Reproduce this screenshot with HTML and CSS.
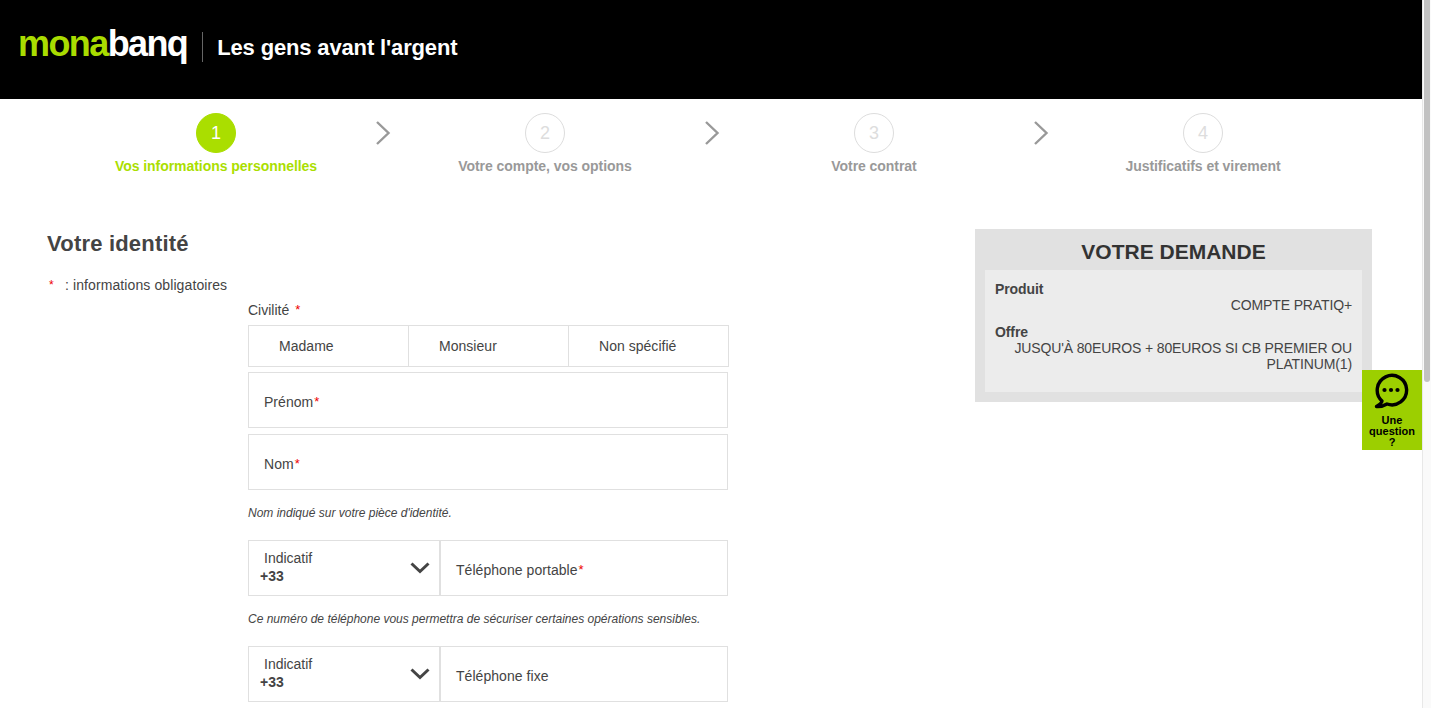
FILE: index.html
```
<!DOCTYPE html>
<html lang="fr">
<head>
<meta charset="utf-8">
<title>Monabanq</title>
<link rel="stylesheet" href="styles.css">
</head>
<body>
<div class="viewport">
  <div class="page">
    <header class="topbar">
      <div class="logo"><span class="logo-green">mona</span>banq</div>
      <div class="tagline">Les gens avant l'argent</div>
    </header>

    <nav class="steps">
      <div class="step active"><div class="dot">1</div><div class="step-label">Vos informations personnelles</div>
        <svg class="arrow" width="16" height="26" viewBox="0 0 16 26"><path d="M2 2l11.500 11L2 24" fill="none" stroke="#999" stroke-width="2.400"/></svg></div>
      <div class="step"><div class="dot">2</div><div class="step-label">Votre compte, vos options</div>
        <svg class="arrow" width="16" height="26" viewBox="0 0 16 26"><path d="M2 2l11.500 11L2 24" fill="none" stroke="#999" stroke-width="2.400"/></svg></div>
      <div class="step"><div class="dot">3</div><div class="step-label">Votre contrat</div>
        <svg class="arrow" width="16" height="26" viewBox="0 0 16 26"><path d="M2 2l11.500 11L2 24" fill="none" stroke="#999" stroke-width="2.400"/></svg></div>
      <div class="step"><div class="dot">4</div><div class="step-label">Justificatifs et virement</div></div>
    </nav>

    <div class="content">
      <main class="identity">
        <h1 class="title">Votre identité</h1>
        <p class="legend"><span class="req legend-star">*</span>: informations obligatoires</p>
        <form class="form">
          <div class="civ-label">Civilité <span class="req civ-star">*</span></div>
          <div class="radios">
            <div class="radio">Madame</div>
            <div class="radio">Monsieur</div>
            <div class="radio">Non spécifié</div>
          </div>
          <div class="field name-first">Prénom<span class="req">*</span></div>
          <div class="field name-last">Nom<span class="req">*</span></div>
          <p class="hint">Nom indiqué sur votre pièce d'identité.</p>
          <div class="phone">
            <div class="prefix">
              <div class="prefix-text"><div class="prefix-label">Indicatif</div><div class="prefix-value">+33</div></div>
              <svg class="chevron" width="20" height="12" viewBox="0 0 20 12"><path d="M1.500 1.500L10 9.500l8.500-8" fill="none" stroke="#444" stroke-width="3"/></svg>
            </div>
            <div class="phone-input">Téléphone portable<span class="req">*</span></div>
          </div>
          <p class="hint">Ce numéro de téléphone vous permettra de sécuriser certaines opérations sensibles.</p>
          <div class="phone">
            <div class="prefix">
              <div class="prefix-text"><div class="prefix-label">Indicatif</div><div class="prefix-value">+33</div></div>
              <svg class="chevron" width="20" height="12" viewBox="0 0 20 12"><path d="M1.500 1.500L10 9.500l8.500-8" fill="none" stroke="#444" stroke-width="3"/></svg>
            </div>
            <div class="phone-input">Téléphone fixe</div>
          </div>
        </form>
      </main>

      <aside class="summary">
        <h2 class="summary-title">VOTRE DEMANDE</h2>
        <div class="summary-body">
          <div class="summary-key">Produit</div>
          <div class="summary-val">COMPTE PRATIQ+</div>
          <div class="summary-key offer">Offre</div>
          <div class="summary-val">JUSQU'À 80EUROS + 80EUROS SI CB PREMIER OU PLATINUM(1)</div>
        </div>
      </aside>
    </div>

    <a class="help" href="#">
      <svg width="36" height="36" viewBox="0 0 36 36"><path d="M9 28A14.700 14.700 0 1 1 14 31C11 32.800 7.500 33.800 3.500 33.500C6 32 8.500 30.500 9 28Z" fill="none" stroke="#000" stroke-width="3.400" stroke-linejoin="round"/><circle cx="11.500" cy="17" r="2.100"/><circle cx="18" cy="17" r="2.100"/><circle cx="24.500" cy="17" r="2.100"/></svg>
      <span>Une question ?</span>
    </a>
  </div>
  <div class="scrollbar"><div class="thumb"></div></div>
</div>
</body>
</html>
```
FILE: styles.css
```
* { box-sizing: border-box; }
html, body { margin: 0; height: 100%; overflow: hidden; }
body { font-family: "Liberation Sans", Arial, sans-serif; color: #444; background: #fff; font-size: 14px; }
.viewport { display: flex; height: 708px; width: 1431px; overflow: hidden; }
.page { position: relative; width: 1422px; flex: none; }
.scrollbar { flex: 1; background: #fafafa; border-left: 1px solid #e8e8e8; padding: 0 1px; }
.thumb { height: 382px; background: #c2c2c2; border-radius: 0 0 4px 4px; }

.topbar { height: 99px; background: #000; display: flex; align-items: center; padding: 0 0 5px 18px; }
.logo { font-size: 36px; font-weight: 700; letter-spacing: -1.600px; color: #fff; line-height: 40px; padding-right: 15px; position: relative; top: -3px; }
.logo-green { color: #a9dc00; }
.tagline { color: #fff; font-size: 22px; font-weight: 700; letter-spacing: -.15px; border-left: 1px solid #666; padding-left: 14px; height: 30px; line-height: 32px; }

.steps { display: grid; grid-template-columns: repeat(4, 329px); padding: 14px 0 0 51.500px; height: 130px; }
.step { position: relative; display: flex; flex-direction: column; align-items: center; }
.dot { width: 40px; height: 40px; border-radius: 50%; border: 1px solid #ddd; color: #ddd; font-size: 18px; display: flex; align-items: center; justify-content: center; }
.step-label { margin-top: 5px; font-size: 14px; font-weight: 700; color: #999; line-height: 16px; letter-spacing: -.05px; }
.step.active .dot { background: #aade00; border-color: #aade00; color: #fff; }
.step.active .step-label { color: #aade00; }
.arrow { position: absolute; left: 323px; top: 7px; }

.content { display: flex; justify-content: space-between; padding: 0 50px 0 47px; }
.identity { width: 681px; }
.title { margin: 0; font-size: 22px; line-height: 28px; font-weight: 700; color: #444; padding-top: 1px; letter-spacing: .2px; }
.legend { margin: 18px 0 0; font-size: 14px; line-height: 18px; color: #444; display: flex; letter-spacing: .1px; }
.req { color: #e00; font-size: 13px; margin-left: 1px; line-height: 1; vertical-align: 1px; }
.legend-star { width: 18px; padding-left: 2px; margin-left: 0; font-size: 12px; line-height: 18px; }
.form { margin-left: 201px; width: 481px; }
.civ-label { font-size: 14px; line-height: 18px; margin-top: 7px; }
.civ-star { margin-left: 2px; }
.radios { display: flex; height: 42px; margin-top: 6px; border: 1px solid #e0e0e0; }
.radio { flex: 1; padding-left: 30px; line-height: 40px; border-left: 1px solid #e0e0e0; letter-spacing: .03px; }
.radio:first-child { border-left: 0; }
.field { width: 480px; height: 56px; margin-top: 6px; border: 1px solid #e0e0e0; padding-left: 15px; line-height: 58px; letter-spacing: .03px; }
.name-first { margin-top: 5px; }
.hint { margin: 15px 0 0; font-size: 12px; font-style: italic; line-height: 16px; color: #444; height: 20px; }
.phone { width: 480px; height: 56px; margin-top: 15px; border: 1px solid #e0e0e0; display: flex; }
.prefix { width: 192px; flex: none; display: flex; justify-content: space-between; padding: 8px 9px 0 0; border-right: 2px solid #e0e0e0; }
.prefix-text { line-height: 18px; }
.prefix-label { padding-left: 15px; }
.prefix-value { padding-left: 11px; font-weight: 700; }
.chevron { margin-top: 13px; }
.phone-input { flex: 1; padding-left: 15px; line-height: 58px; letter-spacing: .05px; }

.summary { width: 397px; height: 173px; background: #e1e1e1; padding: 0 10px; }
.summary-title { margin: 0; font-size: 21px; height: 41px; line-height: 46px; text-align: center; color: #333; font-weight: 700; }
.summary-body { background: #ececec; height: 122px; padding: 11px 10px 0 10px; line-height: 16px; }
.summary-key { font-weight: 700; color: #444; letter-spacing: -.1px; }
.summary-key.offer { margin-top: 11px; }
.summary-val { text-align: right; color: #444; letter-spacing: -.13px; }

.help { position: absolute; left: 1362px; top: 370px; width: 60px; height: 80px; background: #9ccf00; color: #000; text-decoration: none; text-align: center; font-size: 11px; font-weight: 700; line-height: 11px; padding-top: 3px; display: flex; flex-direction: column; align-items: center; }
.help svg { margin-left: -2px; }
.help span { margin-top: 6px; width: 50px; }
```
